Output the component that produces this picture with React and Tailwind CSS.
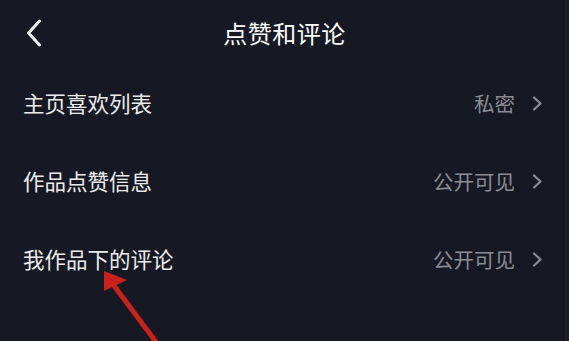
import React from 'react';

const rows = [
  { label: '主页喜欢列表', value: '私密' },
  { label: '作品点赞信息', value: '公开可见' },
  { label: '我作品下的评论', value: '公开可见' },
];

const Chevron = () => (
  <svg width="11" height="15" viewBox="0 0 11 15" className="ml-[17px]">
    <path d="M2 1.5 L8.5 7.5 L2 13.5" fill="none" stroke="#8b8c93" strokeWidth="2.2" strokeLinecap="round" strokeLinejoin="round" />
  </svg>
);

const App = () => {
  return (
    <div
      className="relative w-[569px] h-[341px] overflow-hidden bg-[#161823] flex"
      style={{ fontFamily: '"Noto Sans CJK SC", "Noto Sans", sans-serif' }}
    >
      <div className="flex-1 flex flex-col">
        {/* header */}
        <div className="h-[64px] flex items-center relative">
          <div className="pl-[26px] pt-[1px]">
            <svg width="16" height="28" viewBox="0 0 16 28">
              <path d="M13.5 2 L2.5 14 L13.5 26" fill="none" stroke="#f2f2f4" strokeWidth="3" strokeLinecap="round" strokeLinejoin="round" />
            </svg>
          </div>
          <div className="absolute inset-0 flex items-center justify-center pl-[4px] pt-[1px] text-[24px] text-white tracking-[0.5px]">
            点赞和评论
          </div>
        </div>

        {/* rows */}
        {rows.map((r) => (
          <div key={r.label} className="h-[78px] flex items-center justify-between pl-[23px] pr-[22px]">
            <span className="text-[21.5px] text-[#ececee]">{r.label}</span>
            <div className="flex items-center">
              <span className="text-[20.5px] text-[#8b8c93]">{r.value}</span>
              <Chevron />
            </div>
          </div>
        ))}
      </div>
      <div className="w-[4px] bg-[#1d1e29]" />

      {/* red annotation arrow */}
      <svg className="absolute left-0 top-0" width="569" height="341" viewBox="0 0 569 341">
        <line x1="112" y1="283" x2="162" y2="350" stroke="#c9211b" strokeWidth="5" />
        <polygon points="104,271 104,291 127,280" fill="#c9211b" />
      </svg>
    </div>
  );
};

export default App;
